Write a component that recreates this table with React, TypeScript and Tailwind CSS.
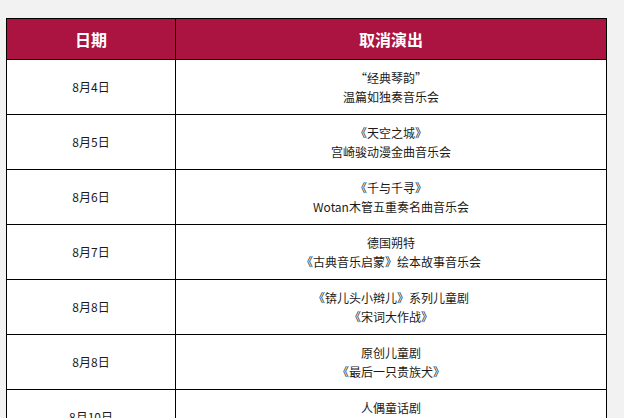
import React from 'react';

const rows = [
  { date: '8月4日', lines: ['“经典琴韵”', '温篇如独奏音乐会'] },
  { date: '8月5日', lines: ['《天空之城》', '宫崎骏动漫金曲音乐会'] },
  { date: '8月6日', lines: ['《千与千寻》', 'Wotan木管五重奏名曲音乐会'] },
  { date: '8月7日', lines: ['德国朔特', '《古典音乐启蒙》绘本故事音乐会'] },
  { date: '8月8日', lines: ['《锛儿头小辫儿》系列儿童剧', '《宋词大作战》'] },
  { date: '8月8日', lines: ['原创儿童剧', '《最后一只贵族犬》'] },
  { date: '8月10日', lines: ['人偶童话剧', '《小红帽》'] },
];

export default function App() {
  return (
    <div className="min-h-screen bg-[#f2f2f2] pt-[18px] pl-[6px] font-['Noto_Sans_CJK_SC','Noto_Sans',sans-serif]">
      <div className="w-[601px] border border-black bg-white">
        <div className="grid grid-cols-[169px_1fr] bg-[#ab1441] text-white font-bold text-[16px] border-b border-black">
          <div className="h-[40px] flex items-center justify-center border-r border-black">日期</div>
          <div className="h-[40px] flex items-center justify-center">取消演出</div>
        </div>
        {rows.map((row, i) => (
          <div key={i} className="grid grid-cols-[169px_1fr] text-[12px] text-[#1a1a1a] border-b border-black">
            <div className="h-[54px] flex items-center justify-center border-r border-black">{row.date}</div>
            <div className="h-[54px] flex flex-col items-center justify-center leading-[19px]">
              {row.lines.map((line, j) => (
                <span key={j}>{line}</span>
              ))}
            </div>
          </div>
        ))}
      </div>
    </div>
  );
}
